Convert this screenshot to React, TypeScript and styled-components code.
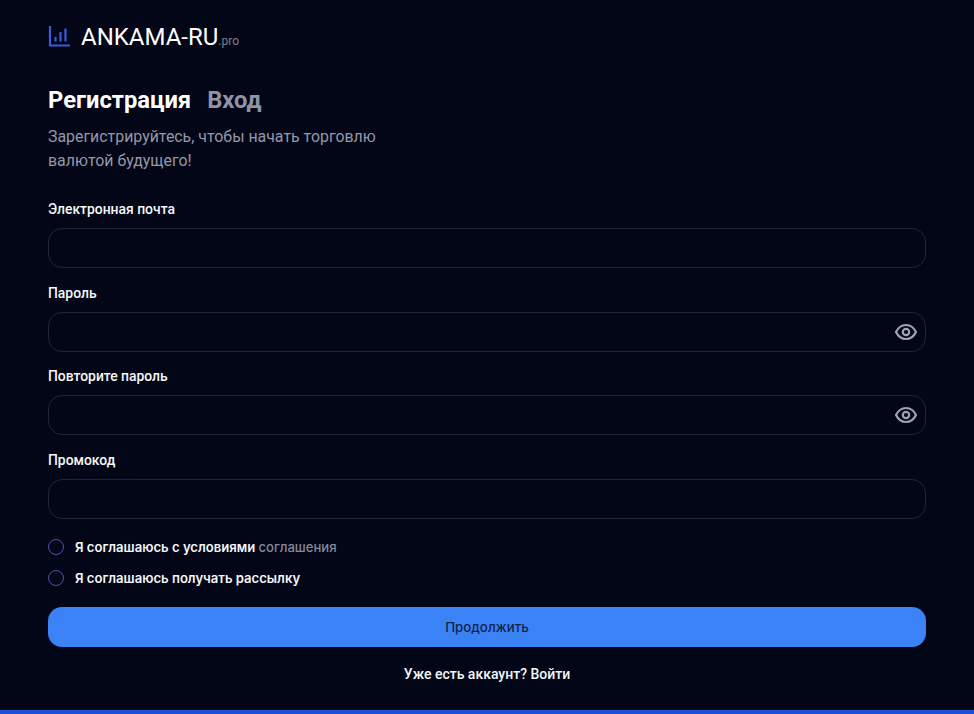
import React from "react";
import styled, { createGlobalStyle } from "styled-components";

const Global = createGlobalStyle`
  html, body { margin: 0; padding: 0; background: #020617; }
  body { font-family: Roboto, "Noto Sans", sans-serif; overflow: hidden; }
  * { box-sizing: border-box; }
`;

const Page = styled.div`
  height: 714px;
  display: flex;
  flex-direction: column;
  background: #020617;
`;

const Main = styled.main`
  flex: 1;
  padding: 20px 48px 0;
  display: flex;
  flex-direction: column;
`;

const Logo = styled.div`
  display: flex;
  align-items: center;
  height: 34px;
  color: #fff;
`;

const LogoName = styled.span`
  font-size: 24px;
  margin-left: 11px;
  line-height: 34px;
`;

const LogoSuffix = styled.span`
  font-size: 12px;
  color: #7d8292;
  align-self: flex-end;
  line-height: 18px;
  margin-bottom: 4px;
`;

const Tabs = styled.div`
  display: flex;
  gap: 16px;
  margin-top: 30px;
`;

const Tab = styled.span<{ $active?: boolean }>`
  font-size: 23.75px;
  line-height: 32px;
  font-weight: 700;
  color: ${(p) => (p.$active ? "#ffffff" : "#8f93a6")};
`;

const Intro = styled.p`
  margin: 8.5px 0 0;
  width: 360px;
  font-size: 15.9px;
  line-height: 24px;
  color: #9498a8;
`;

const Form = styled.form`
  display: flex;
  flex-direction: column;
  margin-top: 26.5px;
`;

const Field = styled.div`
  display: flex;
  flex-direction: column;
  margin-bottom: 14.67px;
`;

const Label = styled.label`
  font-size: 13.9px;
  line-height: 20px;
  font-weight: 500;
  color: #f5f6f8;
  margin-bottom: 9px;
`;

const InputWrap = styled.div`
  position: relative;
  height: 40px;
`;

const Input = styled.input`
  width: 100%;
  height: 100%;
  display: block;
  border: 1px solid #20253a;
  border-radius: 14px;
  background: #020617;
  outline: none;
  color: #fff;
`;

const EyeButton = styled.button`
  position: absolute;
  top: 8px;
  right: 8px;
  width: 24px;
  height: 24px;
  padding: 0;
  border: 0;
  background: none;
  color: #a0a4b0;
`;

const Agreements = styled.div`
  display: flex;
  flex-direction: column;
  gap: 13.5px;
  margin-top: 4px;
`;

const Agreement = styled.div`
  display: flex;
  align-items: center;
  gap: 11px;
  height: 18px;
  font-family: Inter, Roboto, sans-serif;
  font-size: 13.1px;
  font-weight: 600;
  color: #f5f6f8;
`;

const Radio = styled.span`
  width: 16px;
  height: 16px;
  border-radius: 50%;
  border: 1.5px solid #4856a8;
  flex: none;
`;

const Muted = styled.span`
  color: #85899a;
  font-weight: 500;
`;

const Submit = styled.button`
  height: 40px;
  margin-top: 19.5px;
  border: 0;
  border-radius: 14px;
  background: #3b82f6;
  color: #14224f;
  font-family: Inter, Roboto, sans-serif;
  font-size: 13.3px;
  font-weight: 500;
`;

const Footer = styled.div`
  margin-top: 17px;
  text-align: center;
  font-size: 14px;
  line-height: 20px;
  font-weight: 500;
  color: #f5f6f8;
`;

const BottomBar = styled.div`
  height: 4px;
  background: #1d4ed8;
`;

const ChartIcon = () => (
  <svg width="22" height="22" viewBox="0 0 22 22" fill="none" stroke="#3b5bdb" strokeWidth="2.200">
    <path d="M2 0v19.500h20" />
    <path d="M7.500 15.500v-4.500M12.500 15.500v-9.500M17.500 15.500v-13" />
  </svg>
);

const EyeIcon = () => (
  <svg width="24" height="24" viewBox="0 0 24 24" fill="none" stroke="currentColor" strokeWidth="2.200" strokeLinecap="round" strokeLinejoin="round">
    <path d="M2 12C4.300 7.300 7.700 5 12 5s7.700 2.300 10 7c-2.300 4.700-5.700 7-10 7S4.300 16.700 2 12z" />
    <circle cx="12" cy="12" r="3.200" />
  </svg>
);

const fields = [
  { label: "Электронная почта", eye: false },
  { label: "Пароль", eye: true },
  { label: "Повторите пароль", eye: true },
  { label: "Промокод", eye: false },
];

export default function App() {
  return (
    <Page>
      <Global />
      <Main>
        <Logo>
          <ChartIcon />
          <LogoName>ANKAMA-RU</LogoName>
          <LogoSuffix>.pro</LogoSuffix>
        </Logo>
        <Tabs>
          <Tab $active>Регистрация</Tab>
          <Tab>Вход</Tab>
        </Tabs>
        <Intro>Зарегистрируйтесь, чтобы начать торговлю валютой будущего!</Intro>
        <Form onSubmit={(e) => e.preventDefault()}>
          {fields.map((f) => (
            <Field key={f.label}>
              <Label>{f.label}</Label>
              <InputWrap>
                <Input type="text" />
                {f.eye && (
                  <EyeButton type="button" aria-label="Показать пароль">
                    <EyeIcon />
                  </EyeButton>
                )}
              </InputWrap>
            </Field>
          ))}
          <Agreements>
            <Agreement>
              <Radio />
              <span>
                Я соглашаюсь с условиями <Muted>соглашения</Muted>
              </span>
            </Agreement>
            <Agreement>
              <Radio />
              <span>Я соглашаюсь получать рассылку</span>
            </Agreement>
          </Agreements>
          <Submit type="submit">Продолжить</Submit>
        </Form>
        <Footer>Уже есть аккаунт? Войти</Footer>
      </Main>
      <BottomBar />
    </Page>
  );
}
